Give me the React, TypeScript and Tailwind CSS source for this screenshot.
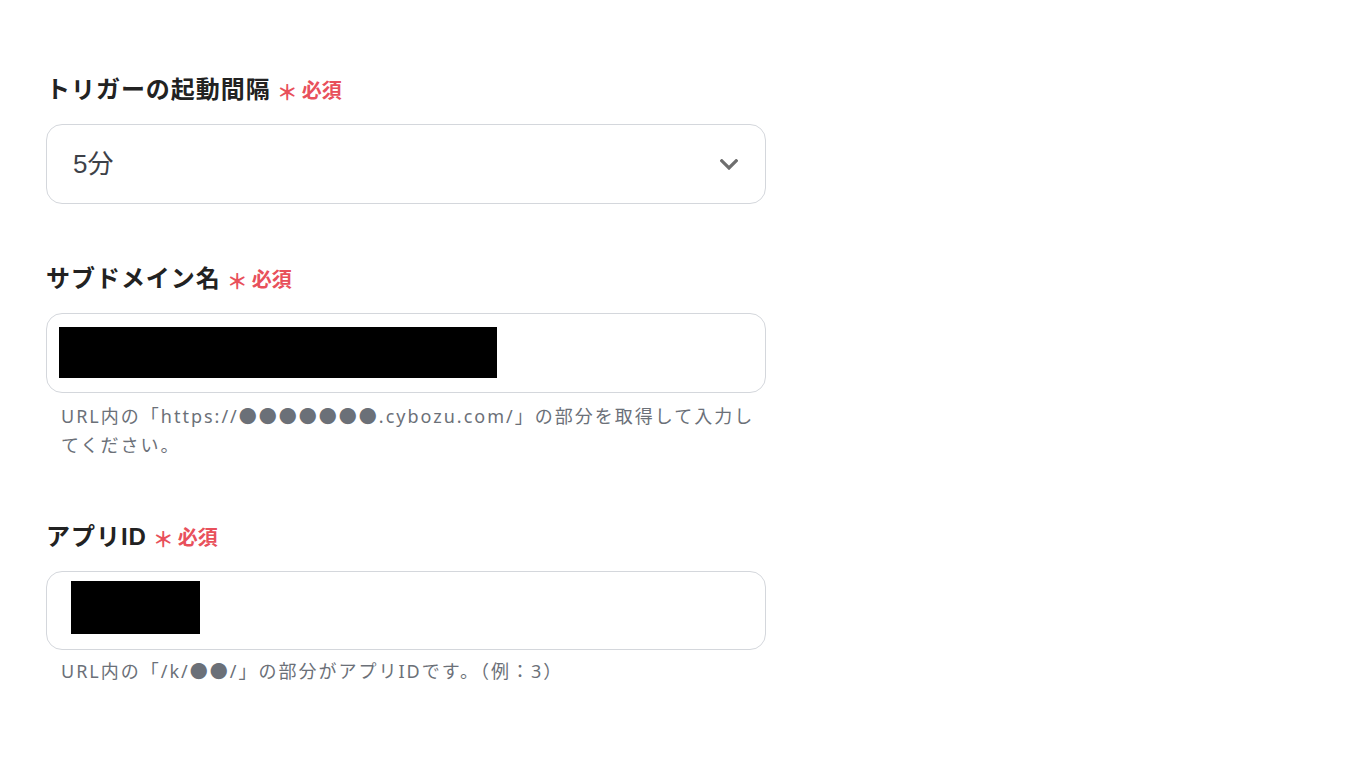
const font = { fontFamily: '"Liberation Sans", "Noto Sans CJK JP", sans-serif' };
const cjk = { fontFamily: '"Noto Sans CJK JP", sans-serif' };
const help = { fontFamily: '"Noto Sans", "Noto Sans CJK JP", sans-serif' };

function Label({ text }: { text: string }) {
  return (
    <div className="flex items-start h-8 mb-4">
      <span className="text-[24px] font-bold text-[#222] leading-[28px] tracking-[0.04em]">{text}</span>
      <span className="ml-[6px] flex items-start text-[#e8505b] font-bold" style={cjk}>
        <span className="text-[21px] leading-[28px] mt-[1px]">＊</span>
        <span className="ml-[4px] text-[20px] leading-[28px]">必須</span>
      </span>
    </div>
  );
}

function Chevron() {
  return (
    <svg width="18" height="11" viewBox="0 0 18 11" fill="none">
      <path d="M1.8 1.8 L9 9 L16.2 1.8" stroke="#6e6e6e" strokeWidth="3.2" strokeLinecap="square" strokeLinejoin="miter" />
    </svg>
  );
}

function Dots({ n }: { n: number }) {
  return <span style={cjk}>{'●'.repeat(n)}</span>;
}

export default function App() {
  return (
    <div className="w-[1372px] h-[772px] bg-white" style={font}>
      <div className="pl-[46px] pt-[76px] w-[766px] flex flex-col">
        <section>
          <Label text="トリガーの起動間隔" />
          <div className="h-20 w-[720px] rounded-2xl border border-[#d4d7dc] flex items-center justify-between pl-[26px] pr-[27px]">
            <span className="text-[26px] text-[#3d4148]">5分</span>
            <Chevron />
          </div>
        </section>

        <section className="mt-[61px]">
          <Label text="サブドメイン名" />
          <div className="h-20 w-[720px] rounded-2xl border border-[#d4d7dc] flex items-start">
            <div className="ml-3 mt-[13px] w-[438px] h-[51px] bg-black" />
          </div>
          <p className="mt-2 pl-[15px] pr-[8px] text-[18px] leading-[29px] tracking-[2px] text-[#6b7078]" style={help}>
            URL内の「https://<Dots n={7} />.cybozu.com/」の部分を取得して入力してください。
          </p>
        </section>

        <section className="mt-[63px]">
          <Label text="アプリID" />
          <div className="h-[79px] w-[720px] rounded-2xl border border-[#d4d7dc] flex items-start">
            <div className="ml-6 mt-[9px] w-[129px] h-[53px] bg-black" />
          </div>
          <p className="mt-[6px] pl-[15px] pr-[8px] text-[18px] leading-[29px] tracking-[2px] text-[#6b7078]" style={help}>
            URL内の「/k/<Dots n={2} />/」の部分がアプリIDです。（例：3）
          </p>
        </section>
      </div>
    </div>
  );
}
